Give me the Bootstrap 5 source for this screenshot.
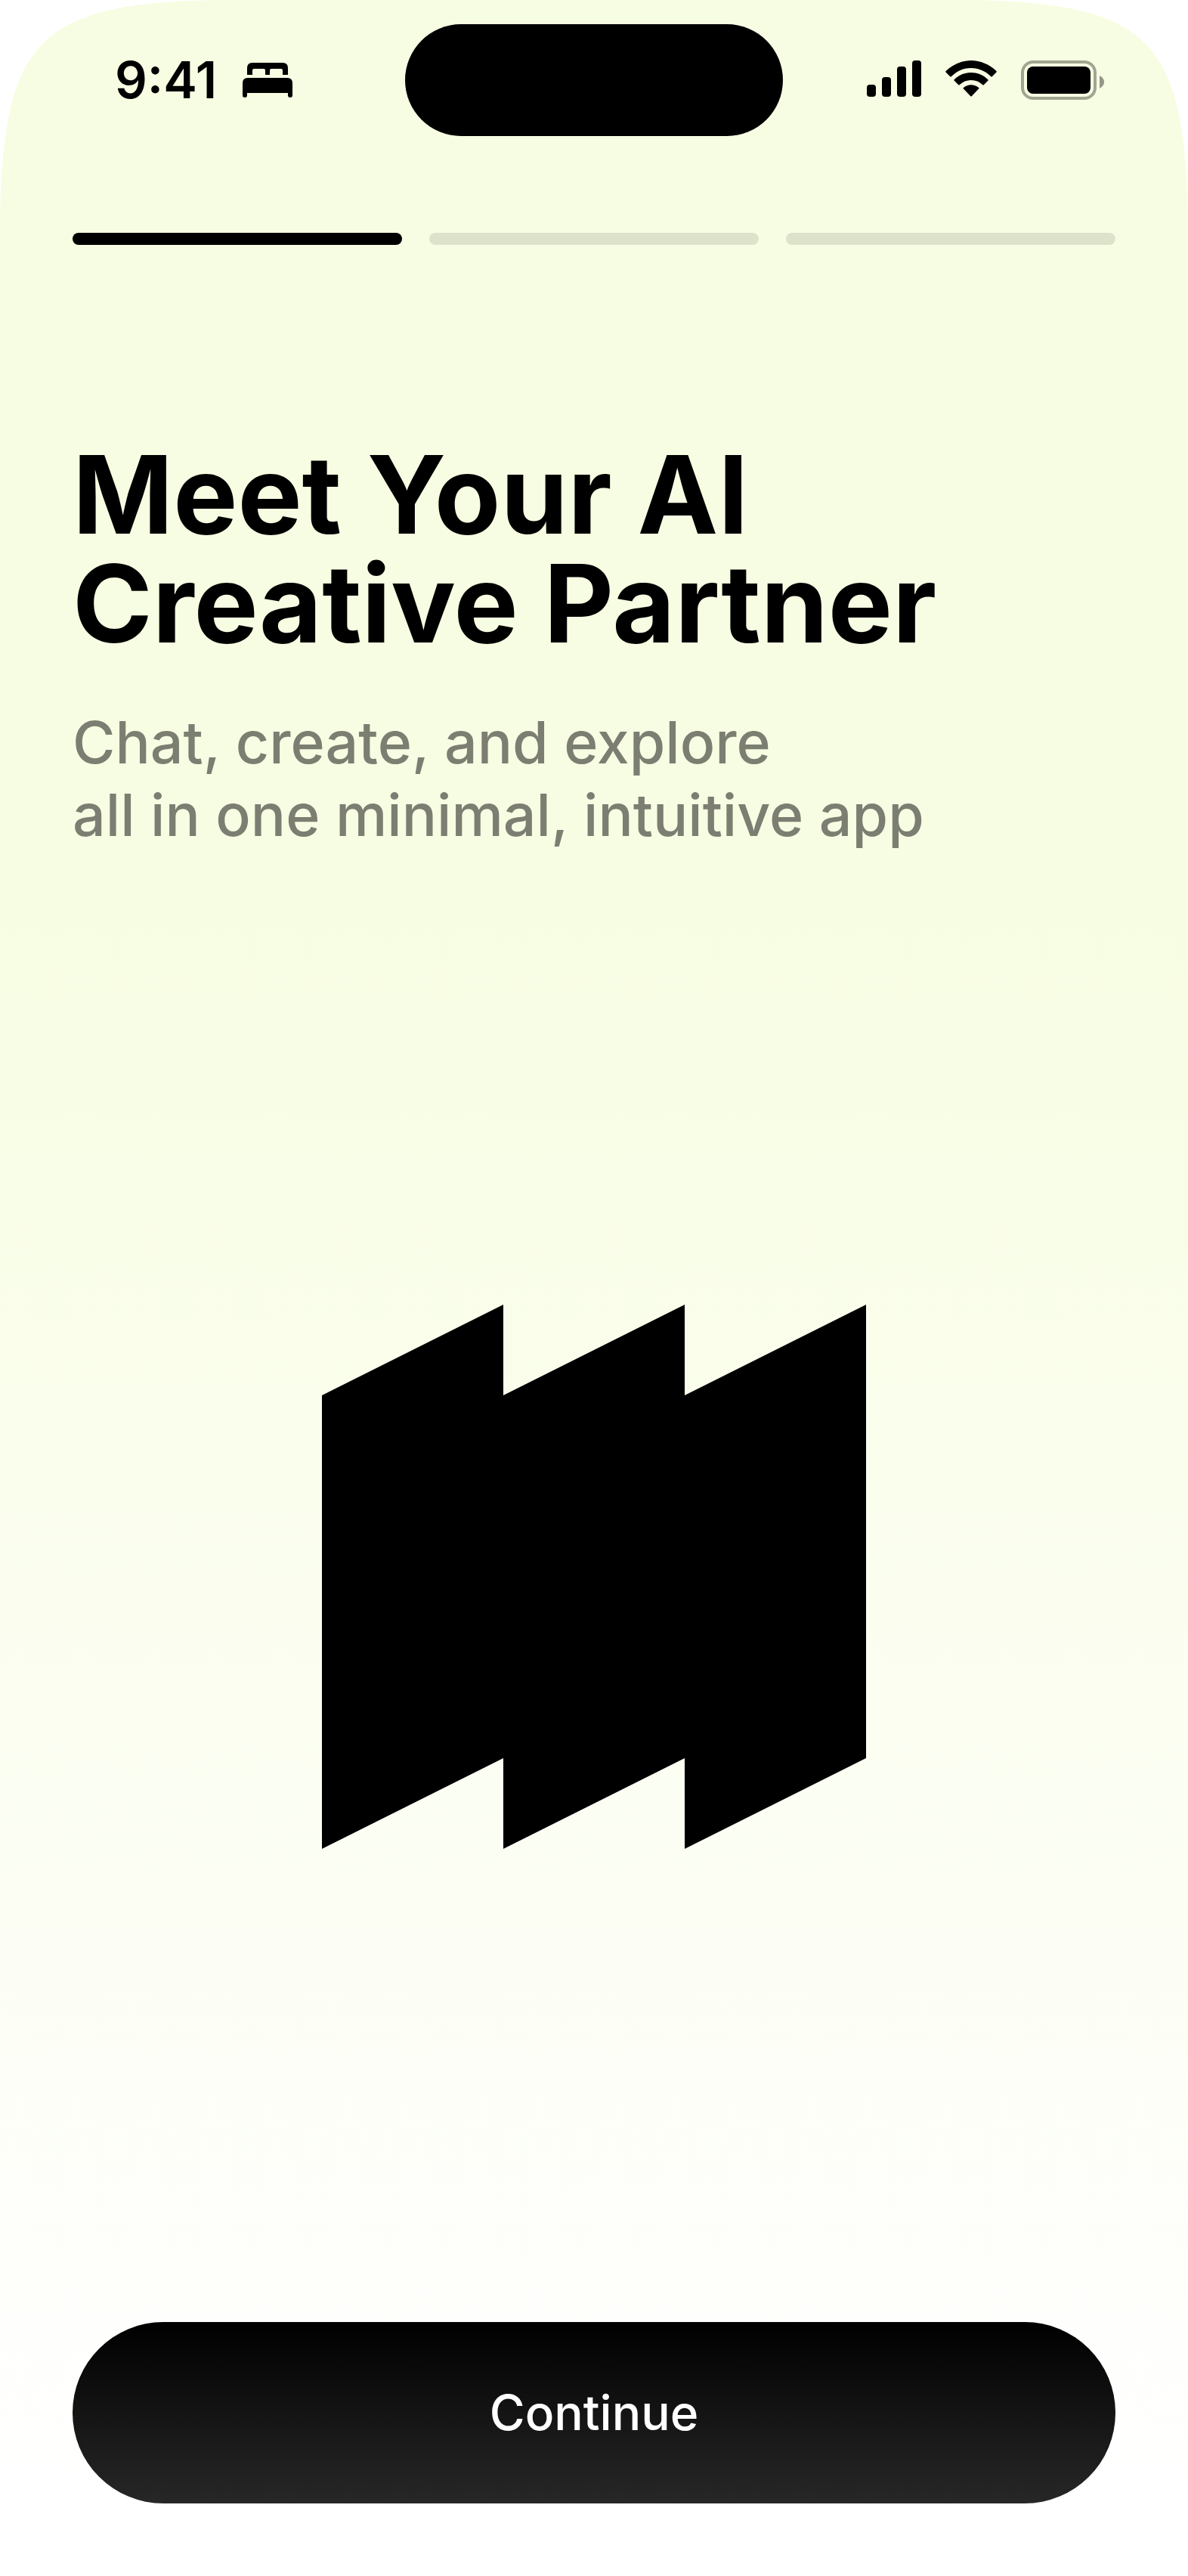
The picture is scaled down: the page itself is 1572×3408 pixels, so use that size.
<!DOCTYPE html>
<html lang="en">
<head>
<meta charset="utf-8">
<meta name="viewport" content="width=device-width, initial-scale=1">
<title>Meet Your AI Creative Partner</title>
<link href="https://cdn.jsdelivr.net/npm/bootstrap@5.3.0/dist/css/bootstrap.min.css" rel="stylesheet">
<style>
  body { font-family: Inter, "Liberation Sans", sans-serif; color: #000; background: #fff; }
  .screen { background: linear-gradient(#f7fde2 34%, #fff 97%); }
  .corner { position: absolute; top: 0; left: 0; width: 320px; height: 320px; }
  .corner-end { left: auto; right: 0; transform: scaleX(-1); }
  .status { display: grid; grid-template-columns: 1fr 500px 1fr; padding-top: 32px; }
  .status-start { padding-left: 152px; gap: 34px; }
  .status-end { padding-right: 111px; gap: 32px; }
  .clock { font-size: 67px; line-height: 80px; font-weight: 600; }
  .island { height: 148px; background: #000; }
  .steps { padding: 128px 96px 0; gap: 36px; }
  .step { height: 16px; background: rgba(0, 0, 0, .1); }
  .step.current { background: #000; }
  .intro { padding: 258px 96px 0; }
  .intro h1 { font-size: 143px; line-height: 144px; font-weight: 700; margin-bottom: 64px; }
  .intro p { font-size: 77px; line-height: 96px; font-weight: 500; color: rgba(0, 0, 0, .5); }
  .hero { padding-bottom: 26px; }
  .actions { padding: 0 96px 96px; }
  .btn-continue { height: 240px; font-size: 64px; font-weight: 500; color: #fff; border: 0; background: linear-gradient(#000, #272727); }
  .btn-continue:hover { color: #fff; background: #272727; }
</style>
<script src="https://cdn.jsdelivr.net/npm/bootstrap@5.3.0/dist/js/bootstrap.bundle.min.js"></script>
</head>
<body>
<div class="screen position-relative d-flex flex-column min-vh-100">
  <svg class="corner" viewBox="0 0 320 320" fill="#fff" aria-hidden="true"><path d="M0 0V300C0 220 8 155 21 118C40 66 66 40 118 21C155 8 220 0 300 0Z"/></svg>
  <svg class="corner corner-end" viewBox="0 0 320 320" fill="#fff" aria-hidden="true"><path d="M0 0V300C0 220 8 155 21 118C40 66 66 40 118 21C155 8 220 0 300 0Z"/></svg>

  <header class="status position-relative align-items-center">
    <div class="status-start d-flex align-items-center">
      <span class="clock">9:41</span>
      <svg width="66" height="46" viewBox="0 0 66 46" role="img" aria-label="Sleep focus"><path d="M6 16V7Q6 0 13 0H53Q60 0 60 7V16H53V10Q53 8 51 8H38Q36 8 36 10V16H30V10Q30 8 28 8H15Q13 8 13 10V16Z"/><path d="M0 43V27Q0 20 7 20H59Q66 20 66 27V43Q66 46 63 46Q60 46 60 43V40H6V43Q6 46 3 46Q0 46 0 43Z"/></svg>
    </div>
    <div class="island rounded-pill"></div>
    <div class="status-end d-flex justify-content-end">
      <svg width="72" height="52" viewBox="0 0 72 52" role="img" aria-label="Signal"><rect y="32" width="12" height="16" rx="4"/><rect x="20" y="22" width="12" height="26" rx="4"/><rect x="40" y="8" width="12" height="40" rx="4"/><rect x="60" width="12" height="48" rx="4"/></svg>
      <svg width="68" height="52" viewBox="0 0 68 52" role="img" aria-label="Wi-Fi"><path d="M34 10C44 10 53 14 60 21Q61 22 62 21L67.500 15.500Q68 15 67.500 14C58 5 46 0 34 0S10 5 .5 14Q0 15 .5 15.500L6 21Q7 22 8 21C15 14 24 10 34 10Z"/><path d="M34 26C40 26 45 28 49 32Q50 33 51 32L56.500 26.500Q57 26 56 25C50 19 42 16 34 16S18 19 12 25Q11 26 11.500 26.500L17 32Q18 33 19 32C23 28 28 26 34 26Z"/><path d="M44.500 37Q45 36.500 44 36C38 31 30 31 24 36Q23 36.500 23.500 37L33 47Q34 48 35 47Z"/></svg>
      <svg width="110" height="52" viewBox="0 0 110 52" role="img" aria-label="Battery full"><rect x="2" y="2" width="96" height="48" rx="14" fill="none" stroke="#000" stroke-opacity=".35" stroke-width="4"/><rect x="8" y="8" width="84" height="36" rx="8"/><path d="M104 20Q110 23 110 28.500T104 37Z" fill-opacity=".4"/></svg>
    </div>
  </header>

  <div class="steps d-flex" role="img" aria-label="Step 1 of 3">
    <div class="step current flex-fill rounded-pill"></div>
    <div class="step flex-fill rounded-pill"></div>
    <div class="step flex-fill rounded-pill"></div>
  </div>

  <section class="intro">
    <h1>Meet Your AI<br>Creative Partner</h1>
    <p class="mb-0">Chat, create, and explore<br>all in one minimal, intuitive app</p>
  </section>

  <main class="hero flex-grow-1 d-flex align-items-center justify-content-center">
    <svg width="720" height="720" viewBox="0 0 720 720" role="img" aria-label="App logo"><path d="M0 120L240 0V120L480 0V120L720 0V600L480 720V600L240 720V600L0 720Z"/></svg>
  </main>

  <div class="actions">
    <button type="button" class="btn btn-continue rounded-pill w-100">Continue</button>
  </div>
</div>
</body>
</html>
